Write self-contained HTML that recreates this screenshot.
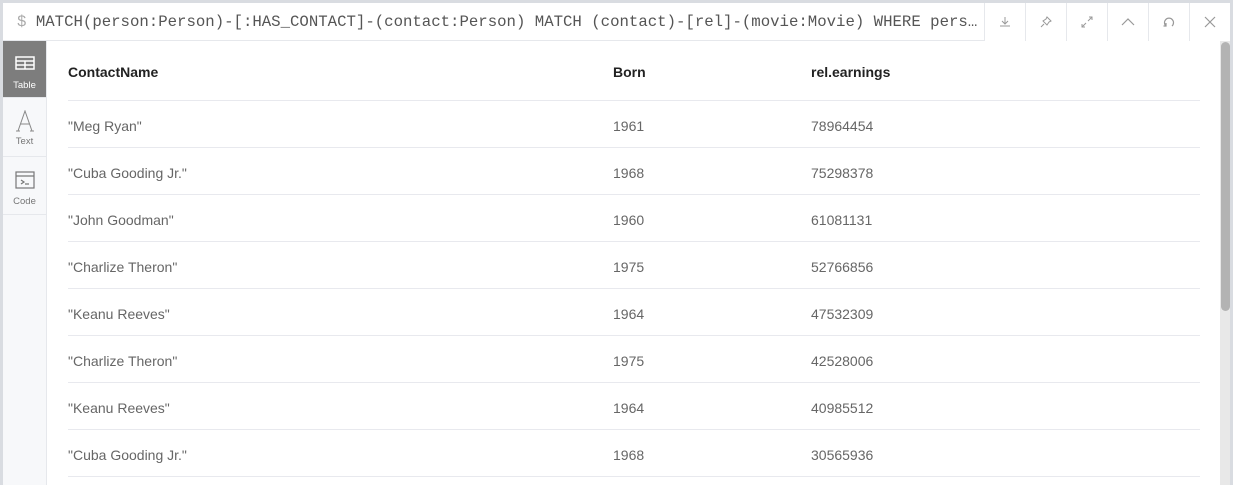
<!DOCTYPE html>
<html><head><meta charset="utf-8"><style>
*{margin:0;padding:0;box-sizing:border-box}
html,body{width:1233px;height:485px;overflow:hidden}
body{background:#d9dce1;font-family:"Liberation Sans",Arial,sans-serif;position:relative}
.frame{position:absolute;left:3px;top:3px;right:3px;bottom:0;background:#fff;overflow:hidden}
.hdr{position:absolute;left:0;top:0;right:0;height:38px;border-bottom:1px solid #e6e8ec;background:#fff}
.q{position:absolute;left:14px;top:10px;width:962px;overflow:hidden;text-overflow:ellipsis;font-family:"Liberation Mono",monospace;font-size:15.7px;color:#555;white-space:nowrap}
.q span{color:#aaa}
.btns{position:absolute;right:0;top:0;height:38px;display:flex;background:#fff}
.btn{width:41px;height:38px;border-left:1px solid #e6e8ec;display:flex;align-items:center;justify-content:center}
.side{position:absolute;left:0;top:38px;width:44px;bottom:0;background:#f7f8fa;border-right:1px solid #e6e8ec}
.tab{position:relative;height:59px;border-bottom:1px solid #e6e8ec;font-size:9.5px;color:#777}
.tab svg{position:absolute;left:50%;transform:translateX(-50%)}
.tab .l{position:absolute;left:0;right:0;text-align:center}
.tab.a{background:#7d7d7d;color:#fff;height:57px}
.tbl{position:absolute;left:65px;top:38px;width:1132px}
.row{height:47px;border-bottom:1px solid #e8e9ee;position:relative;font-size:14px;color:#666}
.row.h{height:60px;color:#222;font-weight:bold}
.row div{position:absolute;top:17px}
.row.h div{top:23px}
.c1{left:0}.c2{left:545px}.c3{left:743px}
.sb{position:absolute;left:1217px;top:38px;width:10px;bottom:0;background:#e8e8e8}
.th{position:absolute;left:1px;top:1px;width:9px;height:269px;background:#b3b3b3;border-radius:5px}
</style></head><body>
<div class="frame">
<div class="hdr">
<div class="q"><span>$</span> MATCH(person:Person)-[:HAS_CONTACT]-(contact:Person) MATCH (contact)-[rel]-(movie:Movie) WHERE person.name</div>
<div class="btns">
<div class="btn"><svg width="14" height="14" viewBox="0 0 14 14" fill="none" stroke="#999" stroke-width="1"><path d="M7 2v7M4 6l3 3 3-3M2 11h10"/></svg></div>
<div class="btn"><svg width="14" height="14" viewBox="0 0 14 14" fill="none" stroke="#999" stroke-width="1"><path d="M8 2l4 4-2 1-2 3-4-4 3-2zM5 9l-3 3"/></svg></div>
<div class="btn"><svg width="14" height="14" viewBox="0 0 14 14" fill="none" stroke="#999" stroke-width="1"><path d="M8 6l4-4M9 2h3v3M6 8l-4 4M2 9v3h3"/></svg></div>
<div class="btn"><svg width="16" height="14" viewBox="0 0 16 14" fill="none" stroke="#999" stroke-width="1.2"><path d="M2 10l6-6 6 6"/></svg></div>
<div class="btn"><svg width="14" height="14" viewBox="0 0 14 14" fill="none" stroke="#999" stroke-width="1.2"><path d="M4 11A4.5 4.5 0 1 1 10 11M4 8v3H1.5"/></svg></div>
<div class="btn"><svg width="14" height="14" viewBox="0 0 14 14" fill="none" stroke="#999" stroke-width="1.2"><path d="M2 2l10 10M12 2L2 12"/></svg></div>
</div>
</div>
<div class="side">
<div class="tab a"><svg style="top:15px" width="20" height="14" viewBox="0 0 20 14" fill="none" stroke="#fff" stroke-width="1.5"><rect x="1" y="1" width="18" height="12"/><path d="M1 5h18M1 9h18M10 5v8"/></svg><div class="l" style="top:39px">Table</div></div>
<div class="tab"><svg style="top:12px" width="20" height="22" viewBox="0 0 20 22" fill="none" stroke="#888" stroke-width="1"><path d="M3 21L10 1l7 20M5.5 14h9M1 21h4M15 21h4"/></svg><div class="l" style="top:38px">Text</div></div>
<div class="tab" style="height:58px"><svg style="top:14px" width="20" height="18" viewBox="0 0 20 18" fill="none" stroke="#777" stroke-width="1.2"><rect x="1" y="1" width="18" height="16"/><path d="M1 5h18M6 9l3 2-3 2M10 13h4"/></svg><div class="l" style="top:39px">Code</div></div>
</div>
<div class="tbl">
<div class="row h"><div class="c1">ContactName</div><div class="c2">Born</div><div class="c3">rel.earnings</div></div>
<div class="row"><div class="c1">"Meg Ryan"</div><div class="c2">1961</div><div class="c3">78964454</div></div>
<div class="row"><div class="c1">"Cuba Gooding Jr."</div><div class="c2">1968</div><div class="c3">75298378</div></div>
<div class="row"><div class="c1">"John Goodman"</div><div class="c2">1960</div><div class="c3">61081131</div></div>
<div class="row"><div class="c1">"Charlize Theron"</div><div class="c2">1975</div><div class="c3">52766856</div></div>
<div class="row"><div class="c1">"Keanu Reeves"</div><div class="c2">1964</div><div class="c3">47532309</div></div>
<div class="row"><div class="c1">"Charlize Theron"</div><div class="c2">1975</div><div class="c3">42528006</div></div>
<div class="row"><div class="c1">"Keanu Reeves"</div><div class="c2">1964</div><div class="c3">40985512</div></div>
<div class="row"><div class="c1">"Cuba Gooding Jr."</div><div class="c2">1968</div><div class="c3">30565936</div></div>
</div>
<div class="sb"><div class="th"></div></div>
</div>
</body></html>
